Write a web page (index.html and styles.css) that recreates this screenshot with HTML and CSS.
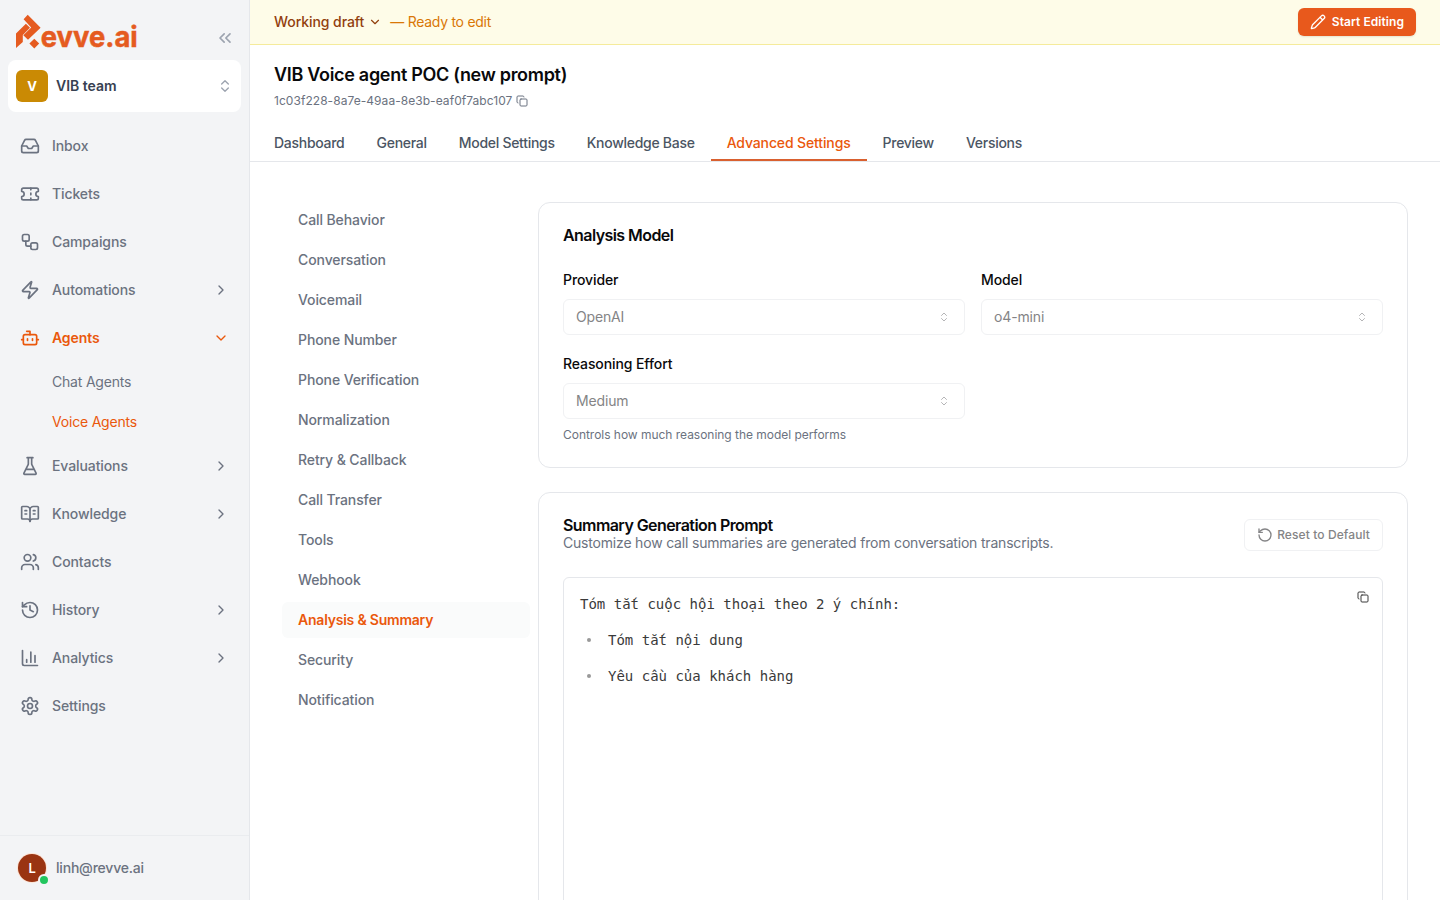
FILE: index.html
```html
<!DOCTYPE html>
<html lang="en">
<head>
    <meta charset="UTF-8">
    <meta name="viewport" content="width=device-width, initial-scale=1.0">
    <title>VIB Voice agent POC (new prompt) - Revve.ai</title>
    <link rel="stylesheet" href="styles.css">
</head>

<body>
    <aside class="sidebar">
        <div class="brand">
            <svg class="logo" width="126" height="44" viewBox="0 0 126 44">
                <path d="M11.7 0.8 L24.6 13.7 L12 25.8 L7.3 21.2 L15.2 13.4 L7.6 5.2 Z M0 34 V19.4 L9.9 9.7 L14 13.8 L6.8 21 V28 Z M18.3 24.8 L23.2 29.6 L18.3 34.4 L13.4 29.6 Z"/>
                <text x="24.8" y="32.6" textLength="97" lengthAdjust="spacingAndGlyphs">evve.ai</text>
            </svg>
            <svg class="icon collapse" width="20" height="20" viewBox="0 0 24 24"><path d="m11 17-5-5 5-5M18 17l-5-5 5-5"/></svg>
        </div>

        <div class="team">
            <span class="team-badge">V</span>
            <span class="team-name">VIB team</span>
            <svg class="icon team-toggle" width="16" height="16" viewBox="0 0 24 24"><path d="m7 15 5 5 5-5M7 9l5-5 5 5"/></svg>
        </div>

        <nav class="nav">
            <a class="nav-item">
                <svg class="icon" width="20" height="20" viewBox="0 0 24 24"><path d="M22 12h-6l-2 3h-4l-2-3H2"/><path d="M5.45 5.11 2 12v6a2 2 0 0 0 2 2h16a2 2 0 0 0 2-2v-6l-3.45-6.89A2 2 0 0 0 16.76 4H7.24a2 2 0 0 0-1.79 1.11z"/></svg>
                <span>Inbox</span>
            </a>
            <a class="nav-item">
                <svg class="icon" width="20" height="20" viewBox="0 0 24 24"><path d="M2 9a3 3 0 0 1 0 6v2a2 2 0 0 0 2 2h16a2 2 0 0 0 2-2v-2a3 3 0 0 1 0-6V7a2 2 0 0 0-2-2H4a2 2 0 0 0-2 2Z"/><path d="M13 5v2M13 17v2M13 11v2"/></svg>
                <span>Tickets</span>
            </a>
            <a class="nav-item">
                <svg class="icon" width="20" height="20" viewBox="0 0 24 24"><rect width="8" height="8" x="3" y="3" rx="2"/><path d="M7 11v4a2 2 0 0 0 2 2h4"/><rect width="8" height="8" x="13" y="13" rx="2"/></svg>
                <span>Campaigns</span>
            </a>
            <a class="nav-item">
                <svg class="icon" width="20" height="20" viewBox="0 0 24 24"><path d="M4 14a1 1 0 0 1-.78-1.63l9.9-10.2a.5.5 0 0 1 .86.46l-1.92 6.02A1 1 0 0 0 13 10h7a1 1 0 0 1 .78 1.63l-9.9 10.2a.5.5 0 0 1-.86-.46l1.92-6.02A1 1 0 0 0 11 14z"/></svg>
                <span>Automations</span>
                <svg class="icon arrow" width="16" height="16" viewBox="0 0 24 24"><path d="m9 18 6-6-6-6"/></svg>
            </a>
            <a class="nav-item active">
                <svg class="icon" width="20" height="20" viewBox="0 0 24 24"><path d="M12 8V4H8"/><rect width="16" height="12" x="4" y="8" rx="2"/><path d="M2 14h2M20 14h2M15 13v2M9 13v2"/></svg>
                <span>Agents</span>
                <svg class="icon arrow" width="16" height="16" viewBox="0 0 24 24"><path d="m6 9 6 6 6-6"/></svg>
            </a>
            <a class="nav-sub">Chat Agents</a>
            <a class="nav-sub current">Voice Agents</a>
            <a class="nav-item">
                <svg class="icon" width="20" height="20" viewBox="0 0 24 24"><path d="M10 2v7.53a2 2 0 0 1-.21.9L4.72 20.55a1 1 0 0 0 .9 1.45h12.76a1 1 0 0 0 .9-1.45l-5.07-10.13a2 2 0 0 1-.21-.9V2M8.5 2h7M7 16h10"/></svg>
                <span>Evaluations</span>
                <svg class="icon arrow" width="16" height="16" viewBox="0 0 24 24"><path d="m9 18 6-6-6-6"/></svg>
            </a>
            <a class="nav-item">
                <svg class="icon" width="20" height="20" viewBox="0 0 24 24"><path d="M12 7v14M16 12h2M16 8h2"/><path d="M3 18a1 1 0 0 1-1-1V4a1 1 0 0 1 1-1h5a4 4 0 0 1 4 4 4 4 0 0 1 4-4h5a1 1 0 0 1 1 1v13a1 1 0 0 1-1 1h-6a3 3 0 0 0-3 3 3 3 0 0 0-3-3z"/><path d="M6 12h2M6 8h2"/></svg>
                <span>Knowledge</span>
                <svg class="icon arrow" width="16" height="16" viewBox="0 0 24 24"><path d="m9 18 6-6-6-6"/></svg>
            </a>
            <a class="nav-item">
                <svg class="icon" width="20" height="20" viewBox="0 0 24 24"><path d="M16 21v-2a4 4 0 0 0-4-4H6a4 4 0 0 0-4 4v2"/><circle cx="9" cy="7" r="4"/><path d="M22 21v-2a4 4 0 0 0-3-3.87M16 3.13a4 4 0 0 1 0 7.75"/></svg>
                <span>Contacts</span>
            </a>
            <a class="nav-item">
                <svg class="icon" width="20" height="20" viewBox="0 0 24 24"><path d="M3 12a9 9 0 1 0 9-9 9.75 9.75 0 0 0-6.74 2.74L3 8"/><path d="M3 3v5h5M12 7v5l4 2"/></svg>
                <span>History</span>
                <svg class="icon arrow" width="16" height="16" viewBox="0 0 24 24"><path d="m9 18 6-6-6-6"/></svg>
            </a>
            <a class="nav-item">
                <svg class="icon" width="20" height="20" viewBox="0 0 24 24"><path d="M3 3v16a2 2 0 0 0 2 2h16M18 17V9M13 17V5M8 17v-3"/></svg>
                <span>Analytics</span>
                <svg class="icon arrow" width="16" height="16" viewBox="0 0 24 24"><path d="m9 18 6-6-6-6"/></svg>
            </a>
            <a class="nav-item">
                <svg class="icon" width="20" height="20" viewBox="0 0 24 24"><path d="M12.22 2h-.44a2 2 0 0 0-2 2v.18a2 2 0 0 1-1 1.73l-.43.25a2 2 0 0 1-2 0l-.15-.08a2 2 0 0 0-2.73.73l-.22.38a2 2 0 0 0 .73 2.73l.15.1a2 2 0 0 1 1 1.72v.51a2 2 0 0 1-1 1.74l-.15.09a2 2 0 0 0-.73 2.73l.22.38a2 2 0 0 0 2.73.73l.15-.08a2 2 0 0 1 2 0l.43.25a2 2 0 0 1 1 1.73V20a2 2 0 0 0 2 2h.44a2 2 0 0 0 2-2v-.18a2 2 0 0 1 1-1.73l.43-.25a2 2 0 0 1 2 0l.15.08a2 2 0 0 0 2.73-.73l.22-.39a2 2 0 0 0-.73-2.73l-.15-.08a2 2 0 0 1-1-1.74v-.5a2 2 0 0 1 1-1.74l.15-.09a2 2 0 0 0 .73-2.73l-.22-.38a2 2 0 0 0-2.73-.73l-.15.08a2 2 0 0 1-2 0l-.43-.25a2 2 0 0 1-1-1.73V4a2 2 0 0 0-2-2z"/><circle cx="12" cy="12" r="3"/></svg>
                <span>Settings</span>
            </a>
        </nav>

        <div class="user">
            <div class="avatar">L<span class="online"></span></div>
            <span>linh@revve.ai</span>
        </div>
    </aside>

    <main class="main">
        <div class="draft-bar">
            <span class="draft-name">Working draft</span>
            <svg class="icon draft-arrow" width="14" height="14" viewBox="0 0 24 24"><path d="m6 9 6 6 6-6"/></svg>
            <span class="draft-status">— Ready to edit</span>
            <button class="start-button">
                <svg class="icon" width="16" height="16" viewBox="0 0 24 24"><path d="M21.17 6.81a1 1 0 0 0-3.98-3.98L3.84 16.17a2 2 0 0 0-.5.83l-1.32 4.35a.5.5 0 0 0 .62.62l4.35-1.32a2 2 0 0 0 .83-.5zM15 5l4 4"/></svg>
                <span>Start Editing</span>
            </button>
        </div>

        <header class="header">
            <h1>VIB Voice agent POC (new prompt)</h1>
            <div class="agent-id">
                <span>1c03f228-8a7e-49aa-8e3b-eaf0f7abc107</span>
                <svg class="icon" width="12" height="12" viewBox="0 0 24 24"><rect width="14" height="14" x="8" y="8" rx="2"/><path d="M4 16c-1.1 0-2-.9-2-2V4c0-1.1.9-2 2-2h10c1.1 0 2 .9 2 2"/></svg>
            </div>
            <nav class="tabs">
                <a class="tab">Dashboard</a>
                <a class="tab">General</a>
                <a class="tab">Model Settings</a>
                <a class="tab">Knowledge Base</a>
                <a class="tab active">Advanced Settings</a>
                <a class="tab">Preview</a>
                <a class="tab">Versions</a>
            </nav>
        </header>

        <div class="content">
            <nav class="sections">
                <a class="section-link">Call Behavior</a>
                <a class="section-link">Conversation</a>
                <a class="section-link">Voicemail</a>
                <a class="section-link">Phone Number</a>
                <a class="section-link">Phone Verification</a>
                <a class="section-link">Normalization</a>
                <a class="section-link">Retry &amp; Callback</a>
                <a class="section-link">Call Transfer</a>
                <a class="section-link">Tools</a>
                <a class="section-link">Webhook</a>
                <a class="section-link active">Analysis &amp; Summary</a>
                <a class="section-link">Security</a>
                <a class="section-link">Notification</a>
            </nav>

            <div class="cards">
                <section class="card">
                    <h2>Analysis Model</h2>
                    <div class="fields">
                        <div class="field">
                            <label>Provider</label>
                            <div class="select">
                                <span>OpenAI</span>
                                <svg class="icon" width="12" height="12" viewBox="0 0 24 24"><path d="m7 15 5 5 5-5M7 9l5-5 5 5"/></svg>
                            </div>
                        </div>
                        <div class="field">
                            <label>Model</label>
                            <div class="select">
                                <span>o4-mini</span>
                                <svg class="icon" width="12" height="12" viewBox="0 0 24 24"><path d="m7 15 5 5 5-5M7 9l5-5 5 5"/></svg>
                            </div>
                        </div>
                        <div class="field">
                            <label>Reasoning Effort</label>
                            <div class="select">
                                <span>Medium</span>
                                <svg class="icon" width="12" height="12" viewBox="0 0 24 24"><path d="m7 15 5 5 5-5M7 9l5-5 5 5"/></svg>
                            </div>
                            <p class="hint">Controls how much reasoning the model performs</p>
                        </div>
                    </div>
                </section>

                <section class="card prompt-card">
                    <div class="card-head">
                        <div>
                            <h2>Summary Generation Prompt</h2>
                            <p>Customize how call summaries are generated from conversation transcripts.</p>
                        </div>
                        <button class="reset-button">
                            <svg class="icon" width="16" height="16" viewBox="0 0 24 24"><path d="M3 12a9 9 0 1 0 9-9 9.75 9.75 0 0 0-6.74 2.74L3 8"/><path d="M3 3v5h5"/></svg>
                            <span>Reset to Default</span>
                        </button>
                    </div>
                    <div class="editor">
                        <div class="prompt">
                            <p>Tóm tắt cuộc hội thoại theo 2 ý chính:</p>
                            <ul>
                                <li>Tóm tắt nội dung</li>
                                <li>Yêu cầu của khách hàng</li>
                            </ul>
                        </div>
                        <svg class="icon" width="12" height="12" viewBox="0 0 24 24"><rect width="14" height="14" x="8" y="8" rx="2"/><path d="M4 16c-1.1 0-2-.9-2-2V4c0-1.1.9-2 2-2h10c1.1 0 2 .9 2 2"/></svg>
                    </div>
                </section>
            </div>
        </div>
    </main>
</body>
</html>
```
FILE: styles.css
```css
* {
    box-sizing: border-box;
}

body {
    margin: 0;
    display: flex;
    height: 100vh;
    overflow: hidden;
    font-family: Inter, "Liberation Sans", sans-serif;
    font-size: 14px;
    line-height: 20px;
    letter-spacing: -0.1px;
    color: #09090b;
    background: #fff;
}

h1, h2, p, ul {
    margin: 0;
    padding: 0;
}

button {
    font-family: inherit;
}

.icon {
    flex-shrink: 0;
    fill: none;
    stroke: currentColor;
    stroke-width: 2;
    stroke-linecap: round;
    stroke-linejoin: round;
}

/* Sidebar */
.sidebar {
    width: 250px;
    flex-shrink: 0;
    display: flex;
    flex-direction: column;
    background: #f3f4f6;
    border-right: 1px solid #e5e7eb;
    color: #6b7280;
}

.brand {
    height: 60px;
    padding: 14px 14px 0 16px;
    display: flex;
    justify-content: space-between;
}

.logo {
    fill: #e55b20;
    font-size: 29px;
    font-weight: 700;
    letter-spacing: 0;
}

.logo text {
    stroke: #e55b20;
    stroke-width: 0.5;
}

.collapse {
    margin-top: 14px;
    color: #9ca3af;
}

.team {
    height: 52px;
    margin: 0 8px 10px;
    padding: 0 8px;
    display: flex;
    align-items: center;
    gap: 8px;
    background: #fff;
    border-radius: 8px;
}

.team-badge {
    width: 32px;
    height: 32px;
    border-radius: 6px;
    background: #ca8a04;
    color: #fff;
    font-size: 13px;
    font-weight: 700;
    line-height: 32px;
    text-align: center;
}

.team-name {
    color: #374151;
    font-weight: 600;
    letter-spacing: 0;
}

.team-toggle {
    margin-left: auto;
    color: #9ca3af;
}

.nav {
    flex: 1;
}

.nav-item {
    height: 48px;
    padding: 0 20px;
    display: flex;
    align-items: center;
    gap: 12px;
    font-weight: 500;
}

.nav-item.active {
    color: #ea580c;
    font-weight: 600;
}

.arrow {
    margin-left: auto;
}

.nav-sub {
    display: block;
    padding: 10px 0 10px 52px;
    letter-spacing: -0.2px;
}

.nav-sub.current {
    color: #ea580c;
}

.user {
    height: 65px;
    padding: 0 18px;
    display: flex;
    align-items: center;
    gap: 10px;
    border-top: 1px solid #eaecef;
    font-weight: 500;
    letter-spacing: -0.2px;
}

.avatar {
    position: relative;
    width: 28px;
    height: 28px;
    border-radius: 50%;
    background: #9a3412;
    box-shadow: 0 0 0 1px #fde3d5;
    color: #fff;
    font-size: 13px;
    font-weight: 600;
    line-height: 28px;
    text-align: center;
}

.online {
    position: absolute;
    right: -4px;
    bottom: -4px;
    width: 12px;
    height: 12px;
    border: 2px solid #f3f4f6;
    border-radius: 50%;
    background: #22c55e;
}

/* Top area */
.main {
    flex: 1;
    min-width: 0;
    display: flex;
    flex-direction: column;
}

.draft-bar {
    height: 45px;
    flex-shrink: 0;
    padding: 0 24px;
    display: flex;
    align-items: center;
    background: #fefce8;
    border-bottom: 1px solid #f5eb9b;
}

.draft-name {
    color: #92400e;
    font-weight: 500;
    letter-spacing: -0.07px;
}

.draft-arrow {
    margin: 0 8px 0 4px;
    color: #92400e;
}

.draft-status {
    color: #d97706;
    letter-spacing: -0.27px;
}

.start-button {
    height: 28px;
    margin-left: auto;
    padding: 0 12px;
    display: flex;
    align-items: center;
    gap: 6px;
    border: none;
    border-radius: 6px;
    background: #e8591c;
    box-shadow: 0 1px 2px rgba(0, 0, 0, 0.1);
    color: #fff;
    font-size: 12px;
    line-height: 16px;
    font-weight: 600;
    letter-spacing: 0.06px;
}

.start-button span,
.reset-button span {
    padding-bottom: 1px;
}

.header {
    height: 117px;
    flex-shrink: 0;
    padding-top: 16px;
    display: flex;
    flex-direction: column;
    border-bottom: 1px solid #e5e7eb;
}

.header h1 {
    padding-left: 24px;
    font-size: 18px;
    line-height: 28px;
    font-weight: 600;
    letter-spacing: -0.3px;
}

.agent-id {
    margin-top: 4px;
    padding-left: 24px;
    display: flex;
    align-items: center;
    gap: 4px;
    color: #6b7280;
    font-size: 12px;
    line-height: 16px;
    letter-spacing: 0.05px;
}

.tabs {
    margin-top: auto;
    padding-left: 8px;
    display: flex;
}

.tab {
    height: 36px;
    padding: 8px 16px 0;
    border-bottom: 2px solid transparent;
    color: #4b5563;
    font-weight: 450;
    letter-spacing: -0.28px;
}

.tab.active {
    color: #ea580c;
    border-color: #d9602f;
    font-weight: 500;
    letter-spacing: -0.13px;
}

/* Settings */
.content {
    flex: 1;
    min-height: 0;
    padding: 40px 32px 0;
    display: flex;
    gap: 8px;
}

.sections {
    width: 248px;
    flex-shrink: 0;
    display: flex;
    flex-direction: column;
    gap: 4px;
}

.section-link {
    padding: 8px 16px;
    border-radius: 6px;
    color: #6b7280;
    font-weight: 500;
}

.section-link.active {
    background: #fafbfb;
    color: #ea580c;
    font-weight: 600;
    letter-spacing: -0.22px;
}

.cards {
    flex: 1;
    display: flex;
    flex-direction: column;
    gap: 24px;
}

.card {
    padding: 24px;
    border: 1px solid #e5e7eb;
    border-radius: 12px;
}

.card h2 {
    font-size: 16px;
    line-height: 16px;
    font-weight: 600;
    letter-spacing: -0.57px;
}

.fields {
    margin-top: 27px;
    display: grid;
    grid-template-columns: 1fr 1fr;
    gap: 19px 16px;
}

.field label {
    display: block;
    font-weight: 500;
}

.select {
    height: 36px;
    margin-top: 9px;
    padding: 0 14px 0 12px;
    display: flex;
    align-items: center;
    justify-content: space-between;
    border: 1px solid #f0f1f3;
    border-radius: 6px;
    color: #848486;
    letter-spacing: -0.15px;
}

.select .icon {
    color: #b5b5b7;
}

.hint {
    margin-top: 8px;
    color: #6b7280;
    font-size: 12px;
    line-height: 16px;
    letter-spacing: -0.03px;
}

.prompt-card {
    height: 600px;
    flex-shrink: 0;
}

.card-head {
    display: flex;
    justify-content: space-between;
}

.card-head p {
    color: #6b7280;
    letter-spacing: -0.19px;
}

.reset-button {
    height: 32px;
    margin-top: 2px;
    padding: 0 12px;
    display: flex;
    align-items: center;
    gap: 4px;
    border: 1px solid #f0f1f3;
    border-radius: 6px;
    background: #fff;
    color: #848486;
    font-size: 12px;
    line-height: 16px;
    font-weight: 500;
    letter-spacing: 0.1px;
}

.editor {
    height: 500px;
    margin-top: 24px;
    padding: 13px 13px 0 16px;
    display: flex;
    justify-content: space-between;
    border: 1px solid #e5e7eb;
    border-radius: 6px;
    color: #3a3a3a;
}

.prompt {
    padding-top: 3px;
    font-family: "DejaVu Sans Mono", monospace;
    letter-spacing: 0;
}

.prompt ul {
    list-style: none;
}

.prompt li {
    margin-top: 16px;
    padding-left: 7px;
    display: flex;
    align-items: center;
    gap: 17px;
}

.prompt li::before {
    content: "";
    width: 4px;
    height: 4px;
    border-radius: 50%;
    background: #999;
}
```
